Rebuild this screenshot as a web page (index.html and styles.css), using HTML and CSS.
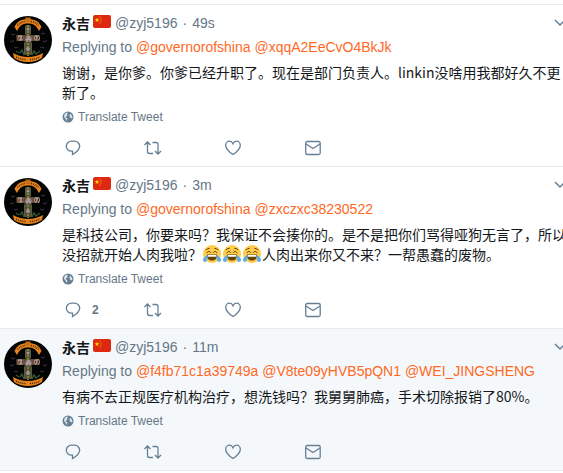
FILE: index.html
```html
<!DOCTYPE html>
<html lang="zh-Hans">
<head>
<meta charset="utf-8">
<meta name="viewport" content="width=device-width, initial-scale=1">
<title>Tweets</title>
<link rel="stylesheet" href="styles.css">
</head>
<body>
<svg class="sprite" aria-hidden="true">
  <symbol id="avatar" viewBox="0 0 48 48">
    <circle cx="24" cy="24" r="24" fill="#020303"/>
    <path d="M21.500 9h5v10h9v6h-8l1 14h-9l1-14h-8v-6h9z" fill="#55502f"/>
    <path d="M24 9v31" stroke="#8b793a" stroke-width="2" stroke-dasharray="2 1"/>
    <path d="M20.500 27v12M27.500 27v12M21.500 10v8M26.500 10v8" stroke="#4b6153" stroke-width="1"/>
    <g fill="#9f938c"><circle cx="16" cy="22" r="3"/><circle cx="33" cy="22" r="3"/><circle cx="24" cy="13" r="1.500"/><circle cx="24" cy="33" r="2"/></g>
    <path d="M13 20l2 5m20-5l-2 5M19 20l1 4m8-4l1 4" stroke="#8a4a3a" stroke-width="1.500"/>
    <path d="M15 22h1m2 0h1M31 22h1m2 0h1" stroke="#2b2524" stroke-width="1.500"/>
    <circle cx="24.500" cy="23" r="3" fill="#b0a3ab"/><path d="M22.500 22h1m2 0h1M23.500 25h2" stroke="#40243b"/>
    <path d="M15 37l-3-2m4 2l2-3 2 5m8 0l2-4 2 3 4-3" fill="none" stroke="#315232" stroke-width="1.500"/>
    <path d="M10.500 11C13 5 18 3 24 3s11 2 13.500 8L35 15C32 9 29 7.500 24 7.500S16 9 13 15z" fill="#e8821a"/>
    <path d="M21.500 6V1.500h5V6z" fill="#c86d12"/>
    <path d="M13.500 9.500q3.500-3.500 7.500-4m6 0q4 .5 7.500 4" fill="none" stroke="#3f2816" stroke-width="1.500" stroke-dasharray="1 1"/>
    <path d="M9 37q7 4 15 4t15-4l-1 5q-6 4-14 4t-14-4z" fill="#e8821a"/>
    <path d="M12 41q5 2.500 10 2.500m4 0q5 0 10-2.500" fill="none" stroke="#3f2816" stroke-width="1.500" stroke-dasharray="1 1"/>
    <path d="M7 18l2 1 2-1M6 25l2 1 2-2M10 31l2 1 2-1M37 17l2 1 2-1M39 25l2 1 2-2M36 31l2 1 2-1" fill="none" stroke="#49304d"/>
  </symbol>
  <symbol id="flag" viewBox="0 0 18 13">
    <rect width="18" height="13" rx="2" fill="#de2910"/>
    <path d="M4 2.500l.6 1.700h1.800L5 5.300l.5 1.700L4 6 2.500 7 3 5.300 1.600 4.200h1.800z" fill="#ffde02"/>
    <g fill="#f6b80b"><circle cx="7" cy="2" r=".6"/><circle cx="8" cy="4" r=".6"/><circle cx="8" cy="6" r=".6"/><circle cx="7" cy="8" r=".6"/></g>
  </symbol>
  <symbol id="joy" viewBox="0 0 36 36">
    <circle cx="18" cy="18" r="18" fill="#ffcc4d"/>
    <path d="M8 19h20c0 8-3 12-10 12S8 27 8 19z" fill="#664500"/>
    <path d="M9.500 20h17l-.5 3.500H10z" fill="#fff"/>
    <path d="M8 15.500q3.500-6 7.500-.5m5 0q4-5.500 7.500.5M6 9.500q3-3 6.500-3m11 0q3.500 0 6.500 3" fill="none" stroke="#664500" stroke-width="2" stroke-linecap="round"/>
    <path d="M9 20c.5 3 0 11-3 13.500-2.500 1.500-6-.5-6-4 0-4.500 5-7.500 9-9.500zM27 20c-.5 3 0 11 3 13.500 2.500 1.500 6-.5 6-4 0-4.500-5-7.500-9-9.500z" fill="#5dadec"/>
  </symbol>
  <symbol id="globe" viewBox="0 0 12 12">
    <circle cx="6" cy="6" r="5.500" fill="#657f94"/>
    <path d="M4.500 1.500l1.500.5-1 1 .5 1.500-1.500 1v1l1.500 1-.5 1.500L4.500 10 3.500 7.500 2 6l.5-3zM8 2.500L9.500 4l1 2.500-1 1L8 6.500l-.5-2z" fill="#dce4e9"/>
  </symbol>
  <symbol id="reply" viewBox="0 0 16 16">
    <path d="M6.500 1.200h3a5.200 5 0 0 1 5.200 5c0 3-3 5.800-7.200 8.300v-3.300h-1a5.200 5 0 0 1 0-10z"/>
  </symbol>
  <symbol id="retweet" viewBox="0 0 20 16">
    <path d="M1.500 5L4.500 2l3 3M4.500 2v9.500q0 2 2 2H10M9.500 2.500H13q2 0 2 2V14M12 11l3 3 3-3"/>
  </symbol>
  <symbol id="heart" viewBox="0 0 16 16">
    <path d="M8 14.500C3.500 11.500.7 8.500.7 5.200.7 3 2.300 1.200 4.500 1.200 6.200 1.200 7.300 2.200 8 3.800c.7-1.600 1.800-2.600 3.500-2.600 2.200 0 3.800 1.800 3.800 4 0 3.300-2.800 6.300-7.300 9.300z"/>
  </symbol>
  <symbol id="mail" viewBox="0 0 16 16">
    <rect x=".7" y="1.500" width="14.500" height="13" rx="1.500"/><path d="M1 4l7 4.500L15 4"/>
  </symbol>
  <symbol id="chevron" viewBox="0 0 12 8">
    <path d="M1 1l5 5 5-5"/>
  </symbol>
</svg>

<main class="stream">
  <article class="tweet">
    <svg class="avatar" role="img" aria-label="永吉"><use href="#avatar"/></svg>
    <div class="content">
      <header class="header">
        <a class="author" href="#"><strong class="name">永吉</strong><svg class="flag"><use href="#flag"/></svg><span class="handle">@zyj5196</span></a>
        <span class="dot">·</span><a class="time" href="#">49s</a>
        <button class="more" type="button" aria-label="More"><svg><use href="#chevron"/></svg></button>
      </header>
      <p class="replying">Replying to <a href="#">@governorofshina</a> <a href="#">@xqqA2EeCvO4BkJk</a></p>
      <p class="text">谢谢，是你爹。你爹已经升职了。现在是部门负责人。linkin没啥用我都好久不更新了。</p>
      <button class="translate" type="button"><svg><use href="#globe"/></svg>Translate Tweet</button>
      <footer class="actions">
        <button type="button" aria-label="Reply"><svg><use href="#reply"/></svg></button>
        <button type="button" aria-label="Retweet"><svg class="wide"><use href="#retweet"/></svg></button>
        <button type="button" aria-label="Like"><svg><use href="#heart"/></svg></button>
        <button type="button" aria-label="Message"><svg><use href="#mail"/></svg></button>
      </footer>
    </div>
  </article>

  <article class="tweet">
    <svg class="avatar" role="img" aria-label="永吉"><use href="#avatar"/></svg>
    <div class="content">
      <header class="header">
        <a class="author" href="#"><strong class="name">永吉</strong><svg class="flag"><use href="#flag"/></svg><span class="handle">@zyj5196</span></a>
        <span class="dot">·</span><a class="time" href="#">3m</a>
        <button class="more" type="button" aria-label="More"><svg><use href="#chevron"/></svg></button>
      </header>
      <p class="replying">Replying to <a href="#">@governorofshina</a> <a href="#">@zxczxc38230522</a></p>
      <p class="text">是科技公司，你要来吗？我保证不会揍你的。是不是把你们骂得哑狗无言了，所以没招就开始人肉我啦？<svg class="emoji"><use href="#joy"/></svg><svg class="emoji"><use href="#joy"/></svg><svg class="emoji"><use href="#joy"/></svg>人肉出来你又不来？一帮愚蠢的废物。</p>
      <button class="translate" type="button"><svg><use href="#globe"/></svg>Translate Tweet</button>
      <footer class="actions">
        <button type="button" aria-label="Reply"><svg><use href="#reply"/></svg><span class="count">2</span></button>
        <button type="button" aria-label="Retweet"><svg class="wide"><use href="#retweet"/></svg></button>
        <button type="button" aria-label="Like"><svg><use href="#heart"/></svg></button>
        <button type="button" aria-label="Message"><svg><use href="#mail"/></svg></button>
      </footer>
    </div>
  </article>

  <article class="tweet active">
    <svg class="avatar" role="img" aria-label="永吉"><use href="#avatar"/></svg>
    <div class="content">
      <header class="header">
        <a class="author" href="#"><strong class="name">永吉</strong><svg class="flag"><use href="#flag"/></svg><span class="handle">@zyj5196</span></a>
        <span class="dot">·</span><a class="time" href="#">11m</a>
        <button class="more" type="button" aria-label="More"><svg><use href="#chevron"/></svg></button>
      </header>
      <p class="replying">Replying to <a href="#">@f4fb71c1a39749a</a> <a href="#">@V8te09yHVB5pQN1</a> <a href="#">@WEI_JINGSHENG</a></p>
      <p class="text">有病不去正规医疗机构治疗，想洗钱吗？我舅舅肺癌，手术切除报销了80%。</p>
      <button class="translate" type="button"><svg><use href="#globe"/></svg>Translate Tweet</button>
      <footer class="actions">
        <button type="button" aria-label="Reply"><svg><use href="#reply"/></svg></button>
        <button type="button" aria-label="Retweet"><svg class="wide"><use href="#retweet"/></svg></button>
        <button type="button" aria-label="Like"><svg><use href="#heart"/></svg></button>
        <button type="button" aria-label="Message"><svg><use href="#mail"/></svg></button>
      </footer>
    </div>
  </article>
</main>
</body>
</html>
```
FILE: styles.css
```css
* { box-sizing: border-box; }

html { overflow: hidden; }

body {
  margin: 0;
  padding-top: 4px;
  overflow: hidden;
  background: #fff;
  color: #14171a;
  font: 14px/20px "Liberation Sans", "Noto Sans CJK SC", sans-serif;
}

a { color: inherit; text-decoration: none; }

p { margin: 0; }

button {
  margin: 0;
  padding: 0;
  border: 0;
  background: none;
  color: #657786;
  font: inherit;
}

.sprite { display: none; }

/* The column runs past the right edge of a narrow window. */
.stream {
  margin-right: -16px;
  border-bottom: 1px solid #e6ecf0;
}

.tweet {
  display: grid;
  grid-template-columns: 48px minmax(0, 1fr);
  gap: 10px;
  padding: 8px 10px 8px 4px;
  border-top: 1px solid #e6ecf0;
}

.active { background: #f5f8fa; }

.avatar {
  width: 48px;
  height: 48px;
  margin-top: 3px;
}

.header {
  display: flex;
  align-items: center;
  height: 20px;
  color: #657786;
}

.author { display: flex; align-items: center; }

.name {
  color: #14171a;
  font-family: "Noto Sans CJK SC", sans-serif;
}

.flag {
  width: 18px;
  height: 13px;
  margin: 0 4px 3px 3px;
}

.dot { margin: 0 5px; }

.more { margin-left: auto; line-height: 0; }

.more svg {
  width: 12px;
  height: 8px;
  margin-right: 3px;
  fill: none;
  stroke: #657f94;
  stroke-width: 1.5;
}

.replying { margin: 4px 0 5px; color: #657786; }

.replying a { color: #ff691f; }

.text { font-family: "Noto Sans CJK SC", sans-serif; }

.emoji {
  width: 18px;
  height: 18px;
  margin: 0 1px;
  vertical-align: -3px;
}

.translate {
  display: flex;
  align-items: center;
  gap: 4px;
  height: 20px;
  margin-top: 5px;
  font-size: 12px;
}

.translate svg { width: 12px; height: 12px; }

.actions {
  display: flex;
  height: 20px;
  margin-top: 11px;
}

.actions button {
  display: flex;
  align-items: center;
  width: 80px;
  padding-left: 3px;
}

.actions svg {
  width: 16px;
  height: 16px;
  fill: none;
  stroke: #657f94;
  stroke-width: 1.3;
}

.actions .wide { width: 20px; margin-left: -2px; }

.count {
  margin-left: 11px;
  font-size: 12px;
  font-weight: bold;
}
```
